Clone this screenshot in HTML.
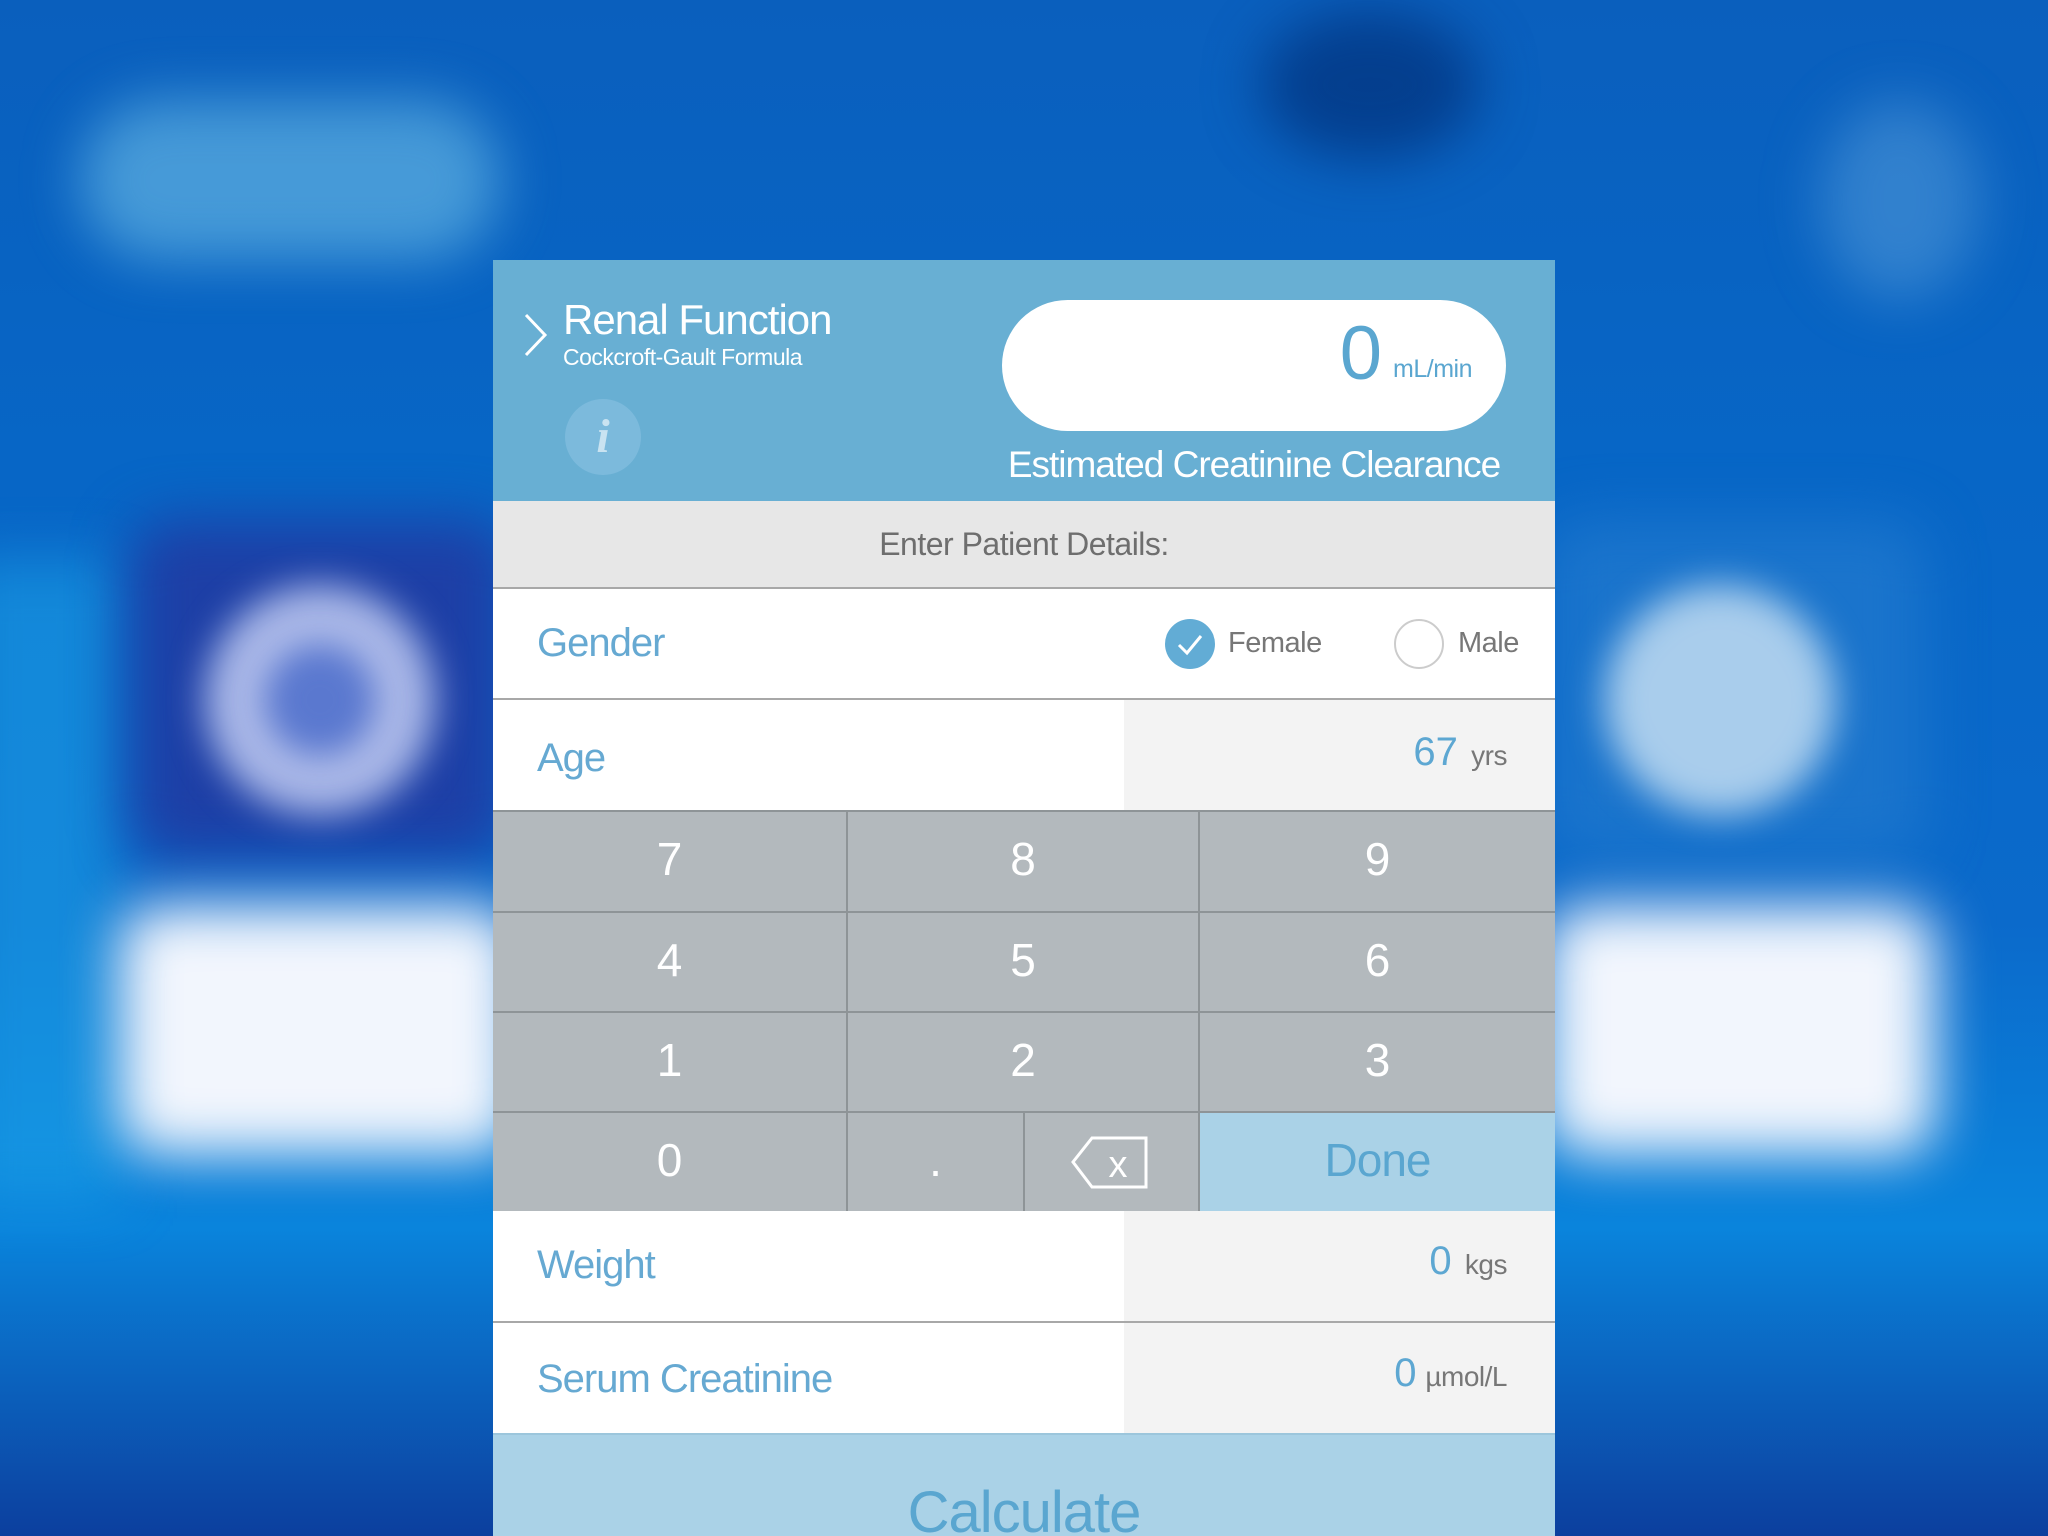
<!DOCTYPE html>
<html><head><meta charset="utf-8"><style>
*{margin:0;padding:0;box-sizing:border-box}
html,body{width:2048px;height:1536px;overflow:hidden}
body{font-family:"Liberation Sans",sans-serif;position:relative;white-space:nowrap;
background:linear-gradient(180deg,#0a5fbd 0%,#0766c6 30%,#0b6acb 60%,#0a84dc 80%,#0c3f9e 100%);}
.bg{position:absolute;filter:blur(28px)}
.p{position:absolute;left:493px;width:1062px;overflow:hidden}
.hdr{top:260px;height:241px;background:#68afd3}
.t1{position:absolute;left:70px;top:36px;color:#fff;font-size:42px;letter-spacing:-1px}
.t2{position:absolute;left:70px;top:84px;color:#fff;font-size:23px;letter-spacing:-.5px}
.pill{position:absolute;left:509px;top:40px;width:504px;height:131px;background:#fff;border-radius:66px}
.est{position:absolute;left:480px;top:184px;color:#fff;font-size:37px;width:562px;text-align:center;letter-spacing:-1px}
.band{top:501px;height:87px;background:#e7e7e7;text-align:center;line-height:87px;font-size:32px;color:#6e6e6e;letter-spacing:-.5px}
.row{background:#fff;border-top:2px solid #a8a8a8}
.lab{position:absolute;left:44px;color:#66a9d2;font-size:40px;letter-spacing:-1px}
.inp{position:absolute;left:631px;right:0;top:0;bottom:0;background:#f3f3f3}
.key{position:absolute;background:#b3b9bd;color:#fff;font-size:46px;text-align:center;border-right:2px solid #8e9497;border-bottom:2px solid #8e9497}
.v{color:#5da7d2;font-size:40px}
.u{color:#777;font-size:28px;letter-spacing:-.5px}
</style></head><body>
<div class="bg" style="left:80px;top:100px;width:420px;height:160px;border-radius:80px;background:rgba(120,200,235,.55)"></div>
<div class="bg" style="left:1260px;top:10px;width:220px;height:150px;border-radius:50%;background:rgba(0,40,110,.6)"></div>
<div class="bg" style="left:-40px;top:560px;width:160px;height:640px;background:rgba(30,170,235,.5)"></div>
<div class="bg" style="left:130px;top:520px;width:380px;height:340px;border-radius:40px;background:#1d3fa6"></div>
<div class="bg" style="left:205px;top:585px;width:230px;height:230px;border-radius:50%;background:#aab8e8;filter:blur(18px)"></div>
<div class="bg" style="left:265px;top:645px;width:110px;height:110px;border-radius:50%;background:#5a78cf;filter:blur(16px)"></div>
<div class="bg" style="left:118px;top:905px;width:400px;height:250px;border-radius:40px;background:#f2f6fd"></div>
<div class="bg" style="left:1545px;top:520px;width:380px;height:340px;border-radius:40px;background:#1a74cc"></div>
<div class="bg" style="left:1605px;top:585px;width:230px;height:230px;border-radius:50%;background:#a9cdec;filter:blur(18px)"></div>
<div class="bg" style="left:1545px;top:905px;width:390px;height:250px;border-radius:40px;background:#f2f6fd"></div>
<div class="bg" style="left:1820px;top:100px;width:160px;height:200px;border-radius:50%;background:rgba(90,160,220,.5)"></div>
<div class="p hdr">
<svg style="position:absolute;left:30px;top:52px" width="26" height="46"><path d="M3 3 L22 23 L3 43" fill="none" stroke="#fff" stroke-width="3"/></svg>
<div class="t1">Renal Function</div>
<div class="t2">Cockcroft-Gault Formula</div>
<div style="position:absolute;left:72px;top:139px;width:76px;height:76px;border-radius:50%;background:#7cbadc;color:#c9e3f1;font:italic bold 48px 'Liberation Serif',serif;text-align:center;line-height:76px">i</div>
<div class="pill"><span style="position:absolute;right:124px;top:10px;color:#5aa6d0;font-size:76px">0</span><span style="position:absolute;right:34px;top:55px;color:#5aa6d0;font-size:25px;letter-spacing:-.5px">mL/min</span></div>
<div class="est">Estimated Creatinine Clearance</div>
</div>
<div class="p band">Enter Patient Details:</div>
<div class="p row" style="top:587px;height:112px">
<div class="lab" style="top:32px">Gender</div>
<div style="position:absolute;left:672px;top:30px;width:50px;height:50px;border-radius:50%;background:#62acd5"><svg width="50" height="50"><path d="M14 26 L22 34 L36 17" fill="none" stroke="#fff" stroke-width="3"/></svg></div>
<div style="position:absolute;left:735px;top:38px;color:#777;font-size:29px;letter-spacing:-.5px">Female</div>
<div style="position:absolute;left:901px;top:30px;width:50px;height:50px;border-radius:50%;border:2px solid #ccc"></div>
<div style="position:absolute;left:965px;top:38px;color:#777;font-size:29px;letter-spacing:-.5px">Male</div>
</div>
<div class="p row" style="top:698px;height:112px">
<div class="inp"></div>
<div class="lab" style="top:36px">Age</div>
<div style="position:absolute;right:48px;top:30px"><span class="v">67</span>&nbsp;&nbsp;&nbsp;<span class="u">yrs</span></div>
</div>
<div class="p" style="top:810px;height:402px;background:#8e9497;border-top:2px solid #8e9497">
<div class="key" style="left:0;top:0;width:355px;height:101px;line-height:95px">7</div>
<div class="key" style="left:355px;top:0;width:352px;height:101px;line-height:95px">8</div>
<div class="key" style="left:707px;top:0;width:355px;height:101px;line-height:95px;border-right:0">9</div>
<div class="key" style="left:0;top:101px;width:355px;height:100px;line-height:94px">4</div>
<div class="key" style="left:355px;top:101px;width:352px;height:100px;line-height:94px">5</div>
<div class="key" style="left:707px;top:101px;width:355px;height:100px;line-height:94px;border-right:0">6</div>
<div class="key" style="left:0;top:201px;width:355px;height:100px;line-height:94px">1</div>
<div class="key" style="left:355px;top:201px;width:352px;height:100px;line-height:94px">2</div>
<div class="key" style="left:707px;top:201px;width:355px;height:100px;line-height:94px;border-right:0">3</div>
<div class="key" style="left:0;top:301px;width:355px;height:101px;line-height:95px;border-bottom:0">0</div>
<div class="key" style="left:355px;top:301px;width:177px;height:101px;line-height:95px;border-bottom:0">.</div>
<div class="key" style="left:532px;top:301px;width:175px;height:101px;border-bottom:0"><svg style="position:absolute;left:45px;top:22px" width="80" height="56"><path d="M22 3 L76 3 L76 52 L22 52 L3 27 Z" fill="none" stroke="#fff" stroke-width="3"/><text x="48" y="42" fill="#fff" font-size="38" font-family="Liberation Sans" text-anchor="middle">x</text></svg></div>
<div style="position:absolute;left:707px;top:301px;width:355px;height:101px;background:#aad2e7;color:#5aa6d0;font-size:46px;text-align:center;line-height:95px;letter-spacing:-1px">Done</div>
</div>
<div class="p row" style="top:1211px;height:111px;border-top:0">
<div class="inp"></div>
<div class="lab" style="top:32px">Weight</div>
<div style="position:absolute;right:48px;top:28px"><span class="v">0</span>&nbsp;&nbsp;&nbsp;<span class="u">kgs</span></div>
</div>
<div class="p row" style="top:1321px;height:112px">
<div class="inp"></div>
<div class="lab" style="top:34px">Serum Creatinine</div>
<div style="position:absolute;right:48px;top:28px"><span class="v">0</span>&nbsp;&nbsp;<span class="u">µmol/L</span></div>
</div>
<div class="p" style="top:1433px;height:103px;background:#aad2e7;border-top:2px solid #9cc6dc">
<div style="position:absolute;left:0;right:0;top:44px;text-align:center;color:#5aa6d0;font-size:58px;letter-spacing:-1px">Calculate</div>
</div>
</body></html>
